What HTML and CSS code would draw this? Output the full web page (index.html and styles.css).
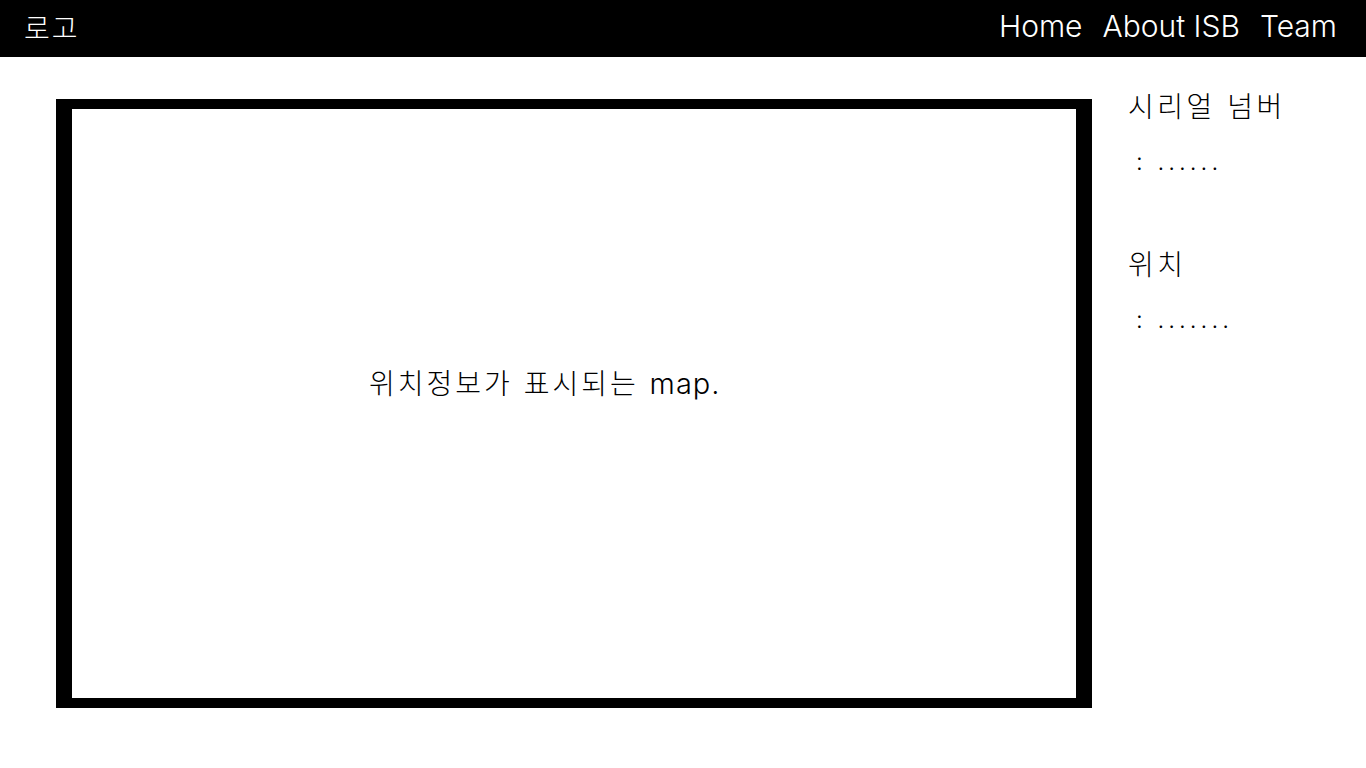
FILE: index.html
```html
<!DOCTYPE html>
<html lang="ko">
<head>
<meta charset="utf-8">
<title>ISB</title>
<link rel="stylesheet" href="styles.css">
</head>
<body>
<header class="topbar">
  <div class="logo">로고</div>
  <nav class="nav">
    <a class="nav-link" href="#">Home</a>
    <a class="nav-link" href="#">About ISB</a>
    <a class="nav-link" href="#">Team</a>
  </nav>
</header>
<main class="content">
  <section class="map-box">
    <p class="map-text">위치정보가 표시되는 <span class="latin">map.</span></p>
  </section>
  <aside class="info">
    <div class="info-item">
      <div class="info-label">시리얼 넘버</div>
      <div class="info-value">: ......</div>
    </div>
    <div class="info-item">
      <div class="info-label">위치</div>
      <div class="info-value">: .......</div>
    </div>
  </aside>
</main>
</body>
</html>
```
FILE: styles.css
```css
* { box-sizing: border-box; }
html, body { margin: 0; padding: 0; background: #fff; }
body {
  font-family: "Inter", "Noto Sans CJK KR", sans-serif;
  font-weight: 300;
  color: #000;
}
.topbar {
  height: 57px;
  background: #000;
  color: #fff;
  display: flex;
  align-items: center;
  justify-content: space-between;
  padding: 0 29px 5px 24px;
}
.logo {
  font-size: 28px;
  line-height: 1;
  letter-spacing: 2px;
  padding-top: 5px;
}
.nav {
  display: flex;
  gap: 20px;
}
.nav-link {
  color: #fff;
  text-decoration: none;
  font-size: 30px;
  line-height: 1;
}
.content {
  display: flex;
  align-items: flex-start;
  padding: 42px 0 0 56px;
  gap: 36px;
}
.map-box {
  width: 1036px;
  height: 609px;
  border-style: solid;
  border-color: #000;
  border-width: 10px 16px;
  padding: 255px 0 0 297px;
}
.map-text {
  margin: 0;
  font-size: 28px;
  line-height: 40px;
  letter-spacing: 3px;
}
.latin {
  font-size: 29px;
  letter-spacing: 1px;
}
.info {
  display: flex;
  flex-direction: column;
  gap: 70px;
  margin-top: -10px;
}
.info-label {
  font-size: 28px;
  line-height: 36px;
  letter-spacing: 3.5px;
}
.info-value {
  font-size: 24px;
  line-height: 30px;
  margin-top: 22px;
  padding-left: 8px;
  letter-spacing: 4px;
}
```
